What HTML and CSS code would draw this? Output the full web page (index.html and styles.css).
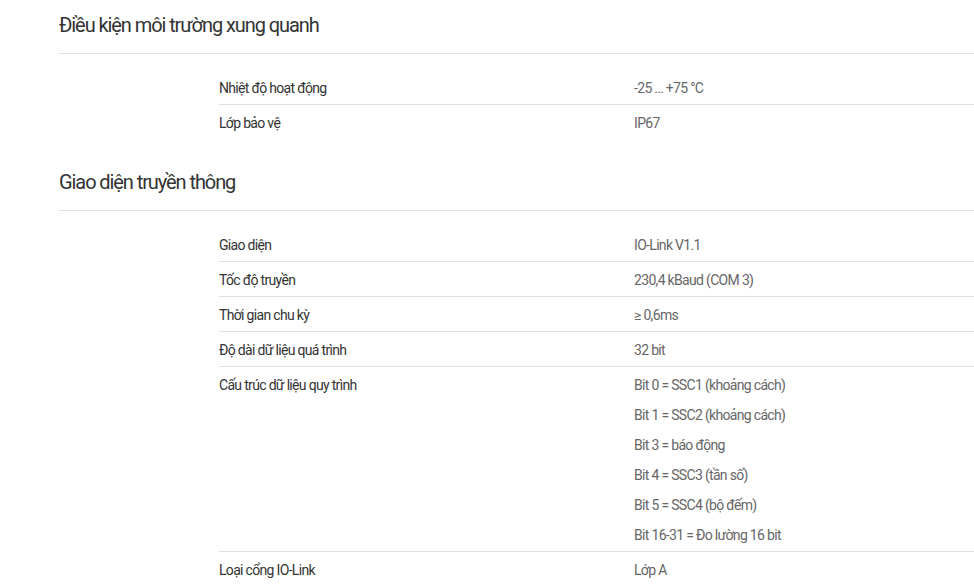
FILE: index.html
```html
<!DOCTYPE html>
<html lang="vi">
<head>
<meta charset="utf-8">
<title>Thông số kỹ thuật</title>
<link rel="stylesheet" href="styles.css">
</head>
<body>
<div class="page">
  <section class="section">
    <h2 class="section-title">Điều kiện môi trường xung quanh</h2>
    <div class="spec-table">
      <div class="spec-row">
        <div class="spec-label">Nhiệt độ hoạt động</div>
        <div class="spec-value"><div>-25 … +75 °C</div></div>
      </div>
      <div class="spec-row">
        <div class="spec-label">Lớp bảo vệ</div>
        <div class="spec-value"><div>IP67</div></div>
      </div>
    </div>
  </section>
  <section class="section">
    <h2 class="section-title">Giao diện truyền thông</h2>
    <div class="spec-table">
      <div class="spec-row">
        <div class="spec-label">Giao diện</div>
        <div class="spec-value"><div>IO-Link V1.1</div></div>
      </div>
      <div class="spec-row">
        <div class="spec-label">Tốc độ truyền</div>
        <div class="spec-value"><div>230,4 kBaud (COM 3)</div></div>
      </div>
      <div class="spec-row">
        <div class="spec-label">Thời gian chu kỳ</div>
        <div class="spec-value"><div>≥ 0,6ms</div></div>
      </div>
      <div class="spec-row">
        <div class="spec-label">Độ dài dữ liệu quá trình</div>
        <div class="spec-value"><div>32 bit</div></div>
      </div>
      <div class="spec-row">
        <div class="spec-label">Cấu trúc dữ liệu quy trình</div>
        <div class="spec-value">
          <div>Bit 0 = SSC1 (khoảng cách)</div>
          <div>Bit 1 = SSC2 (khoảng cách)</div>
          <div>Bit 3 = báo động</div>
          <div>Bit 4 = SSC3 (tần số)</div>
          <div>Bit 5 = SSC4 (bộ đếm)</div>
          <div>Bit 16-31 = Đo lường 16 bit</div>
        </div>
      </div>
      <div class="spec-row">
        <div class="spec-label">Loại cổng IO-Link</div>
        <div class="spec-value"><div>Lớp A</div></div>
      </div>
    </div>
  </section>
</div>
</body>
</html>
```
FILE: styles.css
```css
* { box-sizing: border-box; }
html, body { margin: 0; padding: 0; background: #fff; }
body {
  font-family: Roboto, "Noto Sans", "Liberation Sans", sans-serif;
  color: #333;
  font-size: 14px;
  letter-spacing: -0.68px;
}
.page {
  padding-left: 59px;
}
.section {
  margin-bottom: 18px;
}
.section-title {
  margin: 0;
  font-size: 20px;
  font-weight: 400;
  line-height: 30px;
  letter-spacing: -1.08px;
  padding: 10px 0 13px;
  border-bottom: 1px solid #e0e0e0;
  color: #333;
}
.spec-table {
  margin: 16px 0 0 160px;
}
.spec-row {
  display: grid;
  grid-template-columns: 415px 1fr;
  padding: 3px 0 1px;
  border-bottom: 1px solid #e0e0e0;
}
.spec-row:last-child {
  border-bottom: none;
}
.spec-label {
  line-height: 30px;
  color: #333;
}
.spec-value {
  line-height: 30px;
  color: #666;
}
```
